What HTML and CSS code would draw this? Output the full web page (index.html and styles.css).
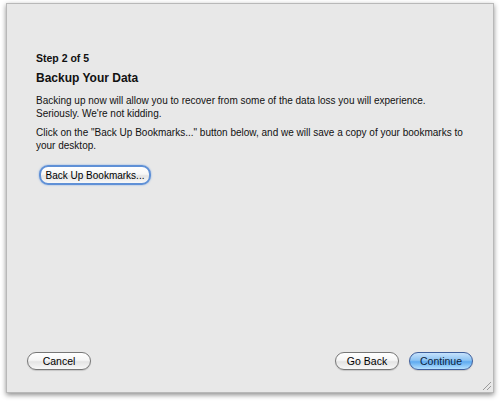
FILE: index.html
```html
<!DOCTYPE html>
<html lang="en">
    <head>
        <meta charset="UTF-8" />
        <title>Backup Your Data</title>
        <link rel="stylesheet" href="styles.css">
    </head>
    <body>
        <div class="window">
            <div class="content">
                <h2 class="step">Step 2 of 5</h2>
                <h1 class="title">Backup Your Data</h1>
                <p>
                    Backing up now will allow you to recover from some of the data loss you will experience.
                    Seriously. We're not kidding.
                </p>
                <p>
                    Click on the "Back Up Bookmarks..." button below, and we will save a copy of your bookmarks to
                    your desktop.
                </p>
                <button class="btn focus">Back Up Bookmarks...</button>
            </div>
            <div class="footer">
                <button class="btn cancel">Cancel</button>
                <div class="nav">
                    <button class="btn">Go Back</button>
                    <button class="btn primary">Continue</button>
                </div>
            </div>
            <div class="grip"></div>
        </div>
    </body>
</html>
```

FILE: styles.css
```css
* {
    margin: 0;
    padding: 0;
    box-sizing: border-box;
}
html,
body {
    width: 100%;
    height: 100%;
    background-color: white;
}
body {
    padding: 3px 6px 0 6px;
    font-family: "Liberation Sans", Arial, sans-serif;
    color: black;
}
.window {
    position: relative;
    width: 488px;
    height: 390px;
    background-color: #e8e8e8;
    border: 1px solid #b8b8b8;
    box-shadow: 0 2px 5px rgba(0, 0, 0, 0.45);
    display: flex;
    flex-direction: column;
}
.content {
    flex: 1;
    padding: 48px 25px 0 29px;
    font-size: 10px;
    line-height: 13px;
    color: #111;
    & p {
        margin-bottom: 6px;
    }
}
.step {
    font-size: 10.5px;
    font-weight: bold;
    margin-bottom: 7px;
}
.title {
    font-size: 12px;
    font-weight: bold;
    margin-bottom: 9px;
}
.btn {
    font-family: inherit;
    font-size: 10.5px;
    height: 18px;
    padding: 0;
    white-space: nowrap;
    border-radius: 9px;
    border: 1px solid #777;
    background: linear-gradient(#ffffff, #f6f6f6 45%, #e4e4e4 55%, #f8f8f8);
    box-shadow: 0 1px 1px rgba(0, 0, 0, 0.15);
    color: black;
}
.focus {
    font-size: 10px;
    margin: 7px 0 0 3px;
    height: 20px;
    width: 112px;
    border: 2px solid #5f90d6;
    box-shadow: 0 0 2px #7fa9e4;
}
.footer {
    display: flex;
    justify-content: space-between;
    align-items: center;
    padding: 0 20px 22px 20px;
}
.cancel {
    width: 64px;
}
.nav {
    display: flex;
    gap: 10px;
    & .btn {
        width: 64px;
    }
}
.primary {
    border-color: #3f5f9c;
    color: #0d1f3c;
    background: linear-gradient(#c6e2fc, #8ec4f3 45%, #5eaaf0 55%, #b4e0ff);
}
.grip {
    position: absolute;
    right: 2px;
    bottom: 2px;
    width: 10px;
    height: 10px;
    background: repeating-linear-gradient(135deg, transparent 0 2px, #9a9a9a 2px 3px);
    clip-path: polygon(100% 0, 100% 100%, 0 100%);
}
```
